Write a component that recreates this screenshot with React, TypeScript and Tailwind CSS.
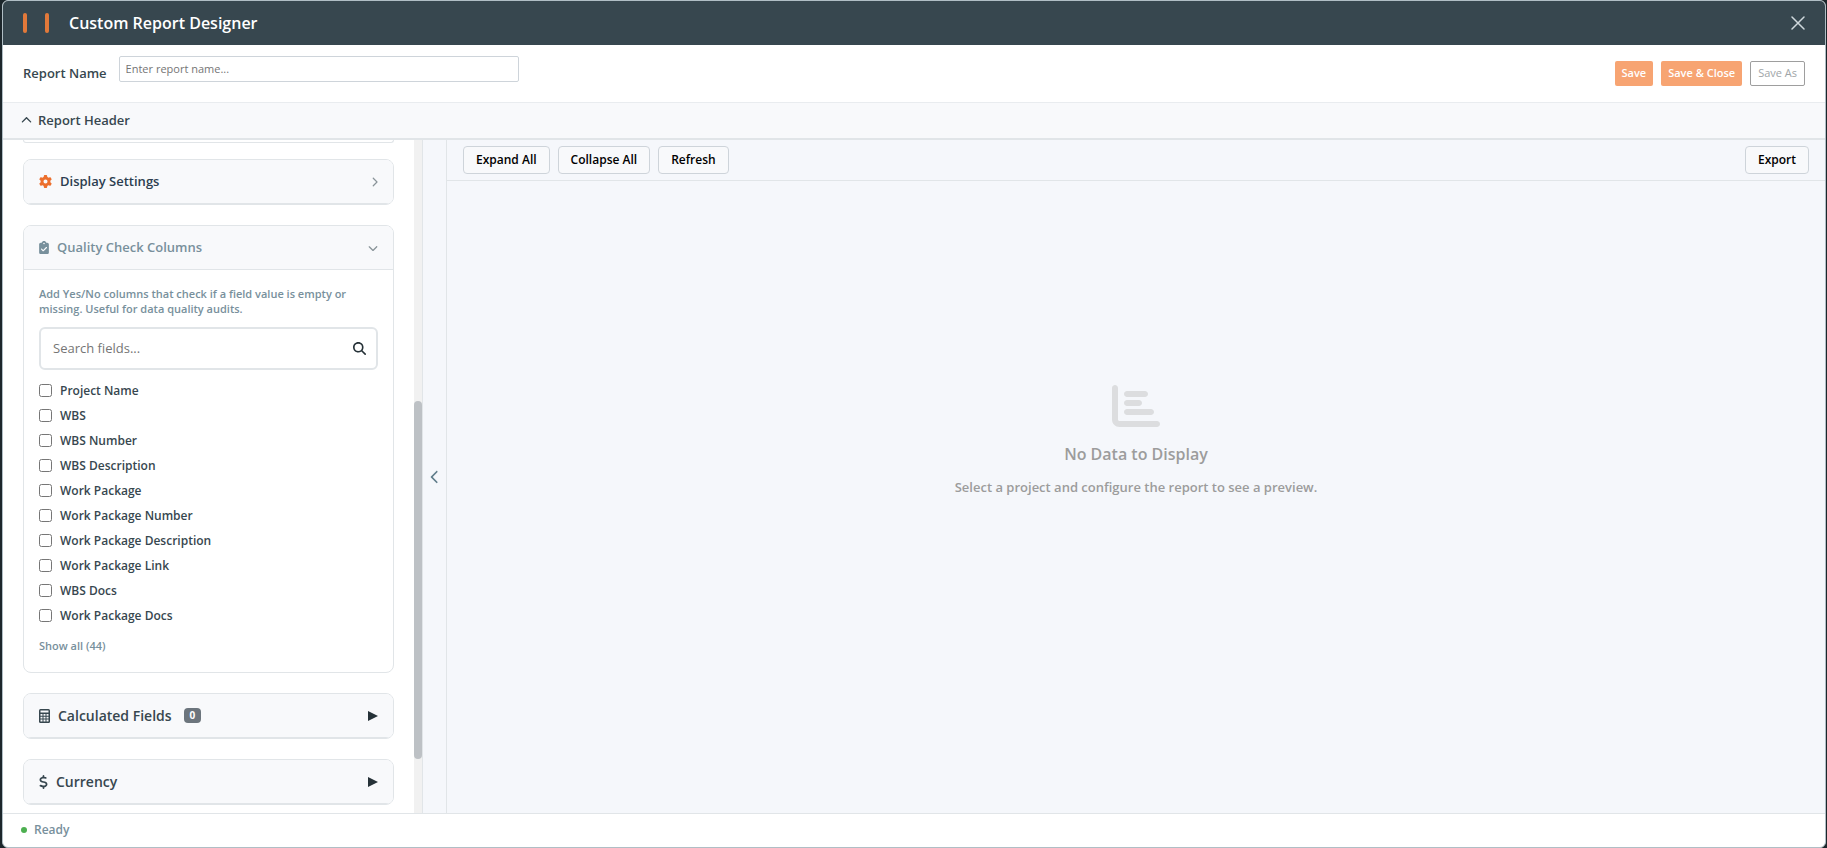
import { useState } from "react";
import type { ReactNode } from "react";
import {
  FaChartBar,
  FaChevronDown,
  FaChevronLeft,
  FaChevronRight,
  FaChevronUp,
  FaClipboardCheck,
  FaDollarSign,
  FaGear,
  FaMagnifyingGlass,
} from "react-icons/fa6";

const FIELDS = [
  "Project Name",
  "WBS",
  "WBS Number",
  "WBS Description",
  "Work Package",
  "Work Package Number",
  "Work Package Description",
  "Work Package Link",
  "WBS Docs",
  "Work Package Docs",
];

function TitleBar() {
  return (
    <header className="flex h-11 shrink-0 items-center bg-[#37474f] px-5">
      <span aria-hidden className="flex gap-[18px]">
        <span className="h-5 w-1 rounded-full bg-[#e2793a]" />
        <span className="h-5 w-1 rounded-full bg-[#e2793a]" />
      </span>
      <h1 className="ml-5 flex-1 text-base font-semibold text-white">Custom Report Designer</h1>
      <button type="button" aria-label="Close" className="text-[#cfd8dc]">
        <svg viewBox="0 0 14 14" className="size-[14px]" fill="none" stroke="currentColor" strokeWidth="1.5">
          <path d="M1 1l12 12M13 1L1 13" strokeLinecap="round" />
        </svg>
      </button>
    </header>
  );
}

function NameRow() {
  return (
    <div className="flex h-[57px] shrink-0 items-center px-5">
      <label htmlFor="report-name" className="text-[13px] font-semibold text-[#37474f]">
        Report Name
      </label>
      <input
        id="report-name"
        placeholder="Enter report name..."
        className="mb-2.5 ml-3 h-[26px] w-[400px] rounded-xs border border-[#ced4da] px-1.5 text-[11px] placeholder:text-[#757575]"
      />
      <div className="ml-auto flex gap-2 text-[11px]">
        <button type="button" className="h-[25px] rounded-xs bg-[#f7a472] px-[7px] font-semibold text-white">
          Save
        </button>
        <button type="button" className="h-[25px] rounded-xs bg-[#f7a472] px-[7px] font-semibold text-white">
          Save &amp; Close
        </button>
        <button type="button" className="h-[25px] rounded-xs border border-[#9e9e9e] px-[7px] text-[#a0a5a8]">
          Save As
        </button>
      </div>
    </div>
  );
}

function Section({ icon, title, extra, arrow, titleClass, children }: {
  icon: ReactNode;
  title: string;
  extra?: ReactNode;
  arrow: ReactNode;
  titleClass: string;
  children?: ReactNode;
}) {
  return (
    <section className="shrink-0 overflow-hidden rounded-lg border border-[#e1e5e8]">
      <button
        type="button"
        className="flex h-11 w-full items-center gap-2 border-b border-[#e1e5e8] bg-[#f8f9fb] px-[15px] text-left"
      >
        {icon}
        <span className={titleClass}>{title}</span>
        {extra}
        <span className="ml-auto">{arrow}</span>
      </button>
      {children}
    </section>
  );
}

function SolidArrow() {
  return (
    <svg viewBox="0 0 10 10" className="size-[10px] text-[#263238]" fill="currentColor">
      <path d="M0 0l10 5-10 5z" />
    </svg>
  );
}

function CalculatorIcon() {
  return (
    <svg viewBox="0 0 11 14" className="h-[14px] w-[11px] text-[#37474f]">
      <rect width="11" height="14" rx="1.5" fill="currentColor" />
      <path
        fill="#f8f9fb"
        d="M1.5 1.5h8v2h-8zM1.5 5h2v1.8h-2zM4.5 5h2v1.8h-2zM7.5 5h2v1.8h-2zM1.5 7.8h2v1.8h-2zM4.5 7.8h2v1.8h-2zM7.5 7.8h2v1.8h-2zM1.5 10.6h2v1.8h-2zM4.5 10.6h2v1.8h-2zM7.5 10.6h2v1.8h-2z"
      />
    </svg>
  );
}

function QualityChecks() {
  const [checked, setChecked] = useState<string[]>([]);

  const toggle = (name: string) =>
    setChecked((prev) => (prev.includes(name) ? prev.filter((f) => f !== name) : [...prev, name]));

  return (
    <div className="px-[15px] py-4">
      <p className="text-[11px] font-semibold leading-[15px] text-[#78909c]">
        Add Yes/No columns that check if a field value is empty or missing. Useful for data quality audits.
      </p>
      <div className="mt-[11px] flex h-[43px] items-center rounded-md border-2 border-[#e1e5e8] pl-3 pr-2.5">
        <input
          aria-label="Search fields"
          placeholder="Search fields..."
          className="min-w-0 flex-1 text-[13px] outline-none placeholder:text-[#757575]"
        />
        <FaMagnifyingGlass className="size-[13px] text-[#263238]" />
      </div>
      <ul className="mt-2">
        {FIELDS.map((name) => (
          <li key={name}>
            <label className="flex h-[25px] items-center gap-2 text-xs font-semibold text-[#37474f]">
              <input
                type="checkbox"
                checked={checked.includes(name)}
                onChange={() => toggle(name)}
                className="size-[13px]"
              />
              {name}
            </label>
          </li>
        ))}
      </ul>
      <button type="button" className="mt-2 block text-[11px] font-semibold leading-5 text-[#78909c]">
        Show all (44)
      </button>
    </div>
  );
}

function Sidebar() {
  return (
    <aside className="flex w-[420px] shrink-0 border-r border-[#e1e5e8]">
      <div className="flex min-w-0 flex-1 flex-col gap-5 overflow-hidden px-5">
        <div className="-mb-1 h-[3px] shrink-0 rounded-b-lg border border-t-0 border-[#e1e5e8]" />
        <Section
          icon={<FaGear className="size-[13px] text-[#ec6f2d]" />}
          title="Display Settings"
          titleClass="text-[13px] font-semibold text-[#2c3e50]"
          arrow={<FaChevronRight className="h-[10px] w-[7px] text-[#8a9499]" />}
        />
        <Section
          icon={<FaClipboardCheck className="h-[13px] w-[10px] text-[#78909c]" />}
          title="Quality Check Columns"
          titleClass="text-[13px] font-semibold text-[#78909c]"
          arrow={<FaChevronDown className="size-[10px] text-[#8a9499]" />}
        >
          <QualityChecks />
        </Section>
        <Section
          icon={<CalculatorIcon />}
          title="Calculated Fields"
          titleClass="text-sm font-semibold text-[#37474f]"
          extra={
            <span className="ml-1 rounded-sm bg-[#6c757d] px-1.5 text-[10px] font-bold leading-[15px] text-white">
              0
            </span>
          }
          arrow={<SolidArrow />}
        />
        <Section
          icon={<FaDollarSign className="h-[14px] w-[9px] text-[#37474f]" />}
          title="Currency"
          titleClass="text-sm font-semibold text-[#37474f]"
          arrow={<SolidArrow />}
        />
      </div>
      <div aria-hidden className="flex w-2 flex-col bg-[#f1f1f1]">
        <div className="flex-[261]" />
        <div className="flex-[358] rounded-full bg-[#bdc1c5]" />
        <div className="flex-[54]" />
      </div>
    </aside>
  );
}

function ToolButton({ children }: { children: ReactNode }) {
  return (
    <button
      type="button"
      className="h-7 rounded border border-[#ced4da] bg-[#f8f9fb] px-3 text-xs font-semibold text-black"
    >
      {children}
    </button>
  );
}

function Preview() {
  return (
    <main className="flex min-w-0 flex-1 flex-col bg-[#f5f7fb]">
      <div className="flex h-[41px] shrink-0 items-center gap-2 border-b border-[#e1e5e8] px-4">
        <ToolButton>Expand All</ToolButton>
        <ToolButton>Collapse All</ToolButton>
        <ToolButton>Refresh</ToolButton>
        <span className="ml-auto flex">
          <ToolButton>Export</ToolButton>
        </span>
      </div>
      <div className="flex flex-1 flex-col items-center pt-[201px] text-[#9c9c9c]">
        <FaChartBar className="size-12 text-[#dcdddf]" />
        <h2 className="mt-3 text-base font-semibold leading-6">No Data to Display</h2>
        <p className="mt-[11px] text-[13px] font-semibold leading-5">
          Select a project and configure the report to see a preview.
        </p>
      </div>
    </main>
  );
}

export default function App() {
  return (
    <div className="h-screen bg-[#1c262b] pl-0.5 pr-px font-['Open_Sans',sans-serif]">
      <div className="flex h-full flex-col overflow-hidden rounded-md border border-[#b0bec5] bg-white">
        <TitleBar />
        <NameRow />
        <button
          type="button"
          className="flex h-[38px] shrink-0 items-center gap-1.5 border-b-2 border-t border-b-[#e1e5e8] border-t-[#e9ecef] bg-[#f8f9fb] px-[18px] text-[13px] font-semibold text-[#37474f]"
        >
          <FaChevronUp className="size-[11px]" />
          Report Header
        </button>
        <div className="flex min-h-0 flex-1">
          <Sidebar />
          <button
            type="button"
            aria-label="Collapse panel"
            className="flex w-6 shrink-0 items-center justify-center border-r border-[#e1e5e8] bg-[#f5f7fb] text-[#607d8b]"
          >
            <FaChevronLeft className="size-[14px]" />
          </button>
          <Preview />
        </div>
        <footer className="flex h-[34px] shrink-0 items-center gap-[7px] border-t border-[#e1e5e8] px-[18px] pb-0.5 text-xs font-semibold text-[#78909c]">
          <span className="size-1.5 rounded-full bg-[#4caf50]" />
          Ready
        </footer>
      </div>
    </div>
  );
}
